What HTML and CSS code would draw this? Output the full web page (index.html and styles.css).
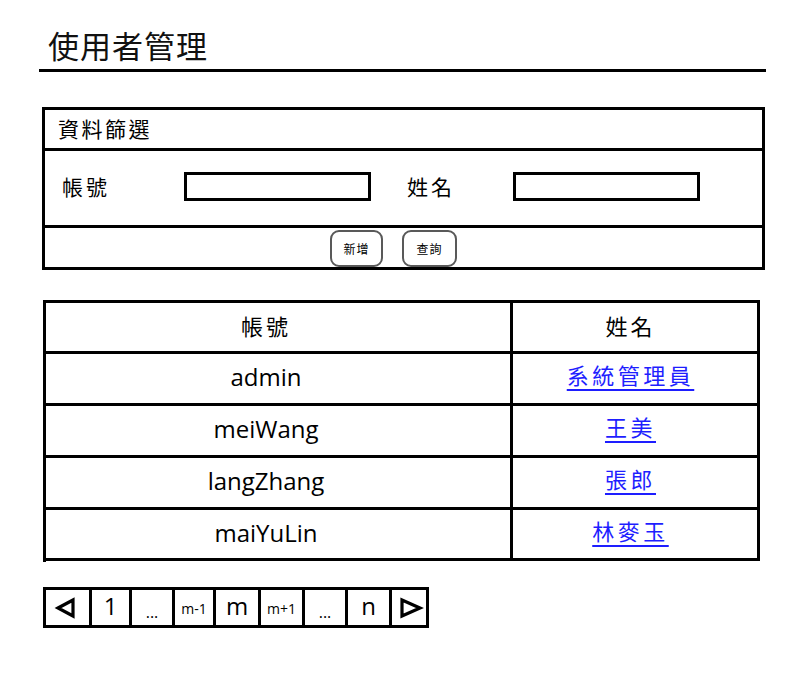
FILE: index.html
```html
<!DOCTYPE html>
<html lang="zh-Hant">
<head>
<meta charset="utf-8">
<title>使用者管理</title>
<link rel="stylesheet" href="styles.css">
</head>
<body>
<div class="page">
  <h1 class="title">使用者管理</h1>

  <section class="filter">
    <div class="filter-head">資料篩選</div>
    <div class="filter-body">
      <span class="field-label label-account">帳號</span>
      <span class="input"></span>
      <span class="field-label label-name">姓名</span>
      <span class="input"></span>
    </div>
    <div class="filter-actions">
      <button class="btn btn-add">新增</button>
      <button class="btn btn-query">查詢</button>
    </div>
  </section>

  <div class="grid">
    <div class="cell col1 head cjk">帳號</div>
    <div class="cell col2 head cjk">姓名</div>
    <div class="cell col1 latin">admin</div>
    <div class="cell col2 link-cell"><a class="link" href="#">系統管理員</a></div>
    <div class="cell col1 latin">meiWang</div>
    <div class="cell col2 link-cell"><a class="link" href="#">王美</a></div>
    <div class="cell col1 latin">langZhang</div>
    <div class="cell col2 link-cell"><a class="link" href="#">張郎</a></div>
    <div class="cell col1 latin last">maiYuLin</div>
    <div class="cell col2 link-cell last"><a class="link" href="#">林麥玉</a></div>
  </div>

  <nav class="pager">
    <span class="pg pg-prev"><svg width="43" height="35" viewBox="0 0 43 35"><polygon points="12,18 27,10 27,26" fill="none" stroke="#000" stroke-width="3.2"/></svg></span>
    <span class="pg pg-1 big">1</span>
    <span class="pg pg-2 dots">...</span>
    <span class="pg pg-3 small">m-1</span>
    <span class="pg pg-4 big">m</span>
    <span class="pg pg-5 small">m+1</span>
    <span class="pg pg-6 dots">...</span>
    <span class="pg pg-7 big">n</span>
    <span class="pg pg-next"><svg width="34" height="35" viewBox="0 0 34 35"><polygon points="10,10 10,26 28,18" fill="none" stroke="#000" stroke-width="3.2"/></svg></span>
  </nav>
</div>
</body>
</html>
```

FILE: styles.css
```css
* { box-sizing: border-box; }

body {
  margin: 0;
  background: #fff;
  color: #000;
  font-family: "Open Sans", "Noto Sans CJK TC", sans-serif;
}

.page {
  padding-left: 39px;
  width: 766px;
}

.title {
  margin: 0;
  font-size: 31px;
  font-weight: normal;
  line-height: 38px;
  letter-spacing: 1px;
  padding: 27px 0 4px 9px;
  border-bottom: 3px solid #000;
  color: #111;
}

.filter {
  margin-top: 35px;
  margin-left: 3px;
  width: 723px;
  border: 3px solid #000;
}

.filter-head {
  height: 41px;
  line-height: 38px;
  padding-left: 13px;
  font-size: 21px;
  letter-spacing: 2.5px;
  border-bottom: 3px solid #000;
}

.filter-body {
  height: 77px;
  display: flex;
  align-items: center;
  padding-left: 17px;
  padding-bottom: 4px;
  border-bottom: 3px solid #000;
}

.field-label {
  font-size: 21px;
  letter-spacing: 3px;
}

.label-account { width: 122px; }

.label-name {
  width: 106px;
  margin-left: 36px;
}

.input {
  display: block;
  width: 187px;
  height: 29px;
  border: 3px solid #000;
  background: #fff;
}

.filter-actions {
  height: 39px;
  display: flex;
  gap: 19px;
  padding-left: 285px;
  padding-top: 2px;
}

.btn {
  height: 37px;
  border: 2px solid #595959;
  border-radius: 9px;
  background: #fff;
  font-family: "Noto Sans CJK TC", sans-serif;
  font-size: 12px;
  letter-spacing: 1px;
  color: #000;
  padding: 0;
}

.btn-add { width: 53px; }
.btn-query { width: 55px; }

.grid {
  margin-top: 30px;
  margin-left: 4px;
  width: 717px;
  display: grid;
  grid-template-columns: 467px 247px;
  grid-auto-rows: 52px;
  grid-template-rows: 51px;
  border-top: 3px solid #000;
  border-left: 3px solid #000;
}

.cell {
  display: flex;
  align-items: center;
  justify-content: center;
  padding-bottom: 4px;
  border-right: 3px solid #000;
  border-bottom: 3px solid #000;
}

.col1 { padding-right: 24px; }
.col2 { padding-right: 9px; }

.cell.last { height: 51px; }

.cjk {
  font-size: 22px;
  letter-spacing: 3px;
}

.latin {
  font-size: 24px;
}

.link-cell {
  padding-bottom: 9px;
}

.link {
  font-size: 22px;
  letter-spacing: 3.5px;
  color: #1e1eff;
  text-decoration: underline;
  text-decoration-thickness: 2px;
  text-underline-offset: 5px;
}

.pager {
  margin-top: 25px;
  margin-left: 4px;
  width: 386px;
  height: 41px;
  display: flex;
  border: 3px solid #000;
}

.pg {
  display: flex;
  justify-content: center;
  align-items: center;
  height: 35px;
  border-left: 3px solid #000;
  line-height: 1;
}

.pg-prev { width: 43px; border-left: none; }
.pg-1 { width: 40px; }
.pg-2 { width: 43px; }
.pg-3 { width: 41px; }
.pg-4 { width: 45px; }
.pg-5 { width: 44px; }
.pg-6 { width: 43px; }
.pg-7 { width: 44px; }
.pg-next { width: 37px; }

.pg svg { display: block; }

.big { font-size: 24px; padding-bottom: 4px; }
.small { font-size: 14px; padding-top: 2px; }
.dots { font-size: 16px; padding-top: 8px; }
```
